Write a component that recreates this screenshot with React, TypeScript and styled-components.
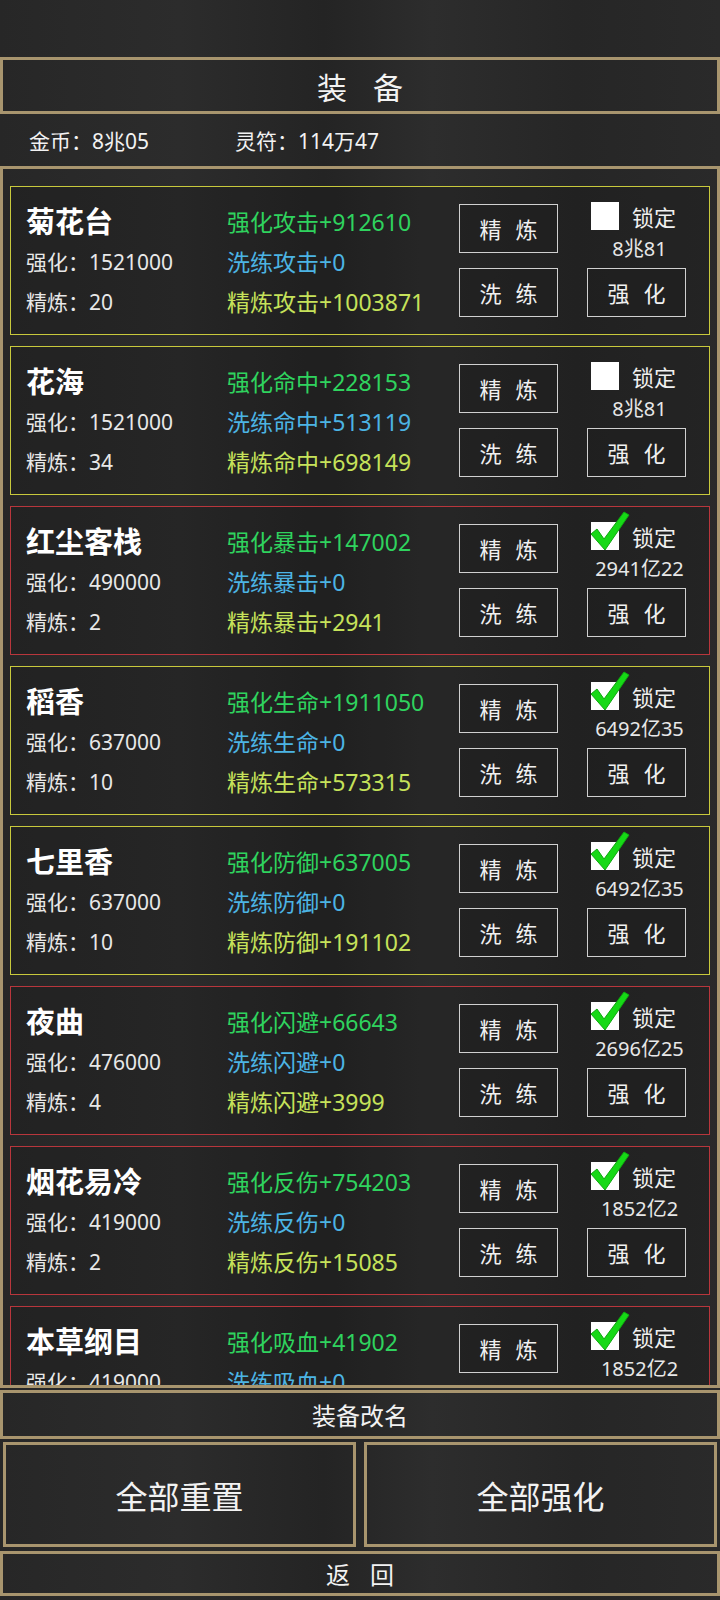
import styled, { createGlobalStyle } from "styled-components";

const GlobalStyle = createGlobalStyle`
  html, body {
    margin: 0;
    padding: 0;
    background: #262626;
  }
  * {
    box-sizing: border-box;
  }
`;

const FONT = `"Noto Sans", "Noto Sans CJK SC", sans-serif`;
const GOLD = "#a8956e";

type Item = {
  name: string;
  level: number;
  refine: number;
  attr: string;
  up: number;
  wash: number;
  ref: number;
  locked: boolean;
  cost: string;
  tone: "yellow" | "red";
};

const items: Item[] = [
  { name: "菊花台", level: 1521000, refine: 20, attr: "攻击", up: 912610, wash: 0, ref: 1003871, locked: false, cost: "8兆81", tone: "yellow" },
  { name: "花海", level: 1521000, refine: 34, attr: "命中", up: 228153, wash: 513119, ref: 698149, locked: false, cost: "8兆81", tone: "yellow" },
  { name: "红尘客栈", level: 490000, refine: 2, attr: "暴击", up: 147002, wash: 0, ref: 2941, locked: true, cost: "2941亿22", tone: "red" },
  { name: "稻香", level: 637000, refine: 10, attr: "生命", up: 1911050, wash: 0, ref: 573315, locked: true, cost: "6492亿35", tone: "yellow" },
  { name: "七里香", level: 637000, refine: 10, attr: "防御", up: 637005, wash: 0, ref: 191102, locked: true, cost: "6492亿35", tone: "yellow" },
  { name: "夜曲", level: 476000, refine: 4, attr: "闪避", up: 66643, wash: 0, ref: 3999, locked: true, cost: "2696亿25", tone: "red" },
  { name: "烟花易冷", level: 419000, refine: 2, attr: "反伤", up: 754203, wash: 0, ref: 15085, locked: true, cost: "1852亿2", tone: "red" },
  { name: "本草纲目", level: 419000, refine: 2, attr: "吸血", up: 41902, wash: 0, ref: 3352, locked: true, cost: "1852亿2", tone: "red" },
];

const Page = styled.div`
  width: 720px;
  height: 1600px;
  display: flex;
  flex-direction: column;
  font-family: ${FONT};
  color: #f2f2f2;
  background: linear-gradient(
    90deg,
    #272727 0%,
    #2c2c2c 25%,
    #242424 45%,
    #2d2d2d 60%,
    #262626 80%,
    #2a2a2a 100%
  );
  overflow: hidden;
`;

const TopSpace = styled.div`
  height: 57px;
  flex: none;
`;

const TitleBar = styled.div`
  height: 57px;
  flex: none;
  border: 3px solid ${GOLD};
  display: flex;
  align-items: center;
  justify-content: center;
  font-size: 30px;
  letter-spacing: 26px;
  padding-left: 26px;
`;

const InfoRow = styled.div`
  height: 52px;
  flex: none;
  display: flex;
  align-items: center;
  padding-left: 29px;
  font-size: 21px;
`;

const Coin = styled.span`
  width: 206px;
`;

const ListPanel = styled.div`
  height: 1222px;
  flex: none;
  border: 3px solid ${GOLD};
  padding: 17px 7px;
  display: flex;
  flex-direction: column;
  gap: 11px;
  overflow: hidden;
`;

const Card = styled.div<{ $tone: "yellow" | "red" }>`
  height: 149px;
  flex: none;
  border: 1.5px solid ${(p) => (p.$tone === "red" ? "#b8363c" : "#c8c93c")};
  display: flex;
  padding-left: 15px;
  background: rgba(20, 20, 20, 0.25);
`;

const InfoCol = styled.div`
  width: 201px;
  padding-top: 15px;
  display: flex;
  flex-direction: column;
`;

const Line = styled.div<{ $color?: string; $size?: number }>`
  height: 40px;
  line-height: 40px;
  white-space: nowrap;
  font-size: ${(p) => p.$size ?? 21}px;
  color: ${(p) => p.$color ?? "#e8e8e8"};
`;

const Name = styled.div`
  height: 40px;
  line-height: 40px;
  font-size: 29px;
  font-weight: bold;
  color: #ffffff;
  white-space: nowrap;
`;

const StatCol = styled.div`
  width: 232px;
  padding-top: 15px;
  display: flex;
  flex-direction: column;
`;

const ActionCol = styled.div`
  width: 99px;
  padding-top: 16.5px;
  display: flex;
  flex-direction: column;
  gap: 15px;
  margin-right: 29px;
`;

const Button = styled.div`
  width: 99px;
  height: 49px;
  border: 1.5px solid #d0d0d0;
  display: flex;
  align-items: center;
  justify-content: center;
  font-size: 22px;
  letter-spacing: 14px;
  padding-left: 14px;
  color: #f0f0f0;
  background: rgba(30, 30, 30, 0.5);
`;

const SideCol = styled.div`
  width: 99px;
  padding-top: 14.5px;
  display: flex;
  flex-direction: column;
`;

const LockRow = styled.div`
  height: 28px;
  display: flex;
  align-items: center;
  padding-left: 4px;
  gap: 13px;
  font-size: 22px;
  color: #f0f0f0;
`;

const Box = styled.div`
  position: relative;
  width: 28px;
  height: 28px;
  background: #ffffff;
  flex: none;
`;

const Tick = styled.svg`
  position: absolute;
  left: -2px;
  top: -14px;
  overflow: visible;
`;

const Cost = styled.div`
  height: 38px;
  line-height: 38px;
  text-align: center;
  font-size: 20px;
  color: #e8e8e8;
  padding-left: 6px;
  white-space: nowrap;
`;

const BottomBar = styled.div<{ $h: number; $mt: number; $size: number }>`
  height: ${(p) => p.$h}px;
  margin-top: ${(p) => p.$mt}px;
  flex: none;
  border: 3px solid ${GOLD};
  display: flex;
  align-items: center;
  justify-content: center;
  font-size: ${(p) => p.$size}px;
  color: #f2f2f2;
`;

const Spaced = styled.span`
  letter-spacing: 20px;
  padding-left: 20px;
`;

const BigRow = styled.div`
  height: 105px;
  margin-top: 3px;
  flex: none;
  display: flex;
  gap: 8px;
  padding: 0 3px;
`;

const BigButton = styled.div`
  flex: 1;
  border: 3px solid ${GOLD};
  display: flex;
  align-items: center;
  justify-content: center;
  font-size: 32px;
  color: #f2f2f2;
`;

function CheckBox({ checked }: { checked: boolean }) {
  return (
    <Box>
      {checked && (
        <Tick width="40" height="44" viewBox="0 0 40 44">
          <path
            d="M2 26 L8 21 L15 31 L35 4 L40 7 L16 42 Z"
            fill="#16d916"
            stroke="#0ea80e"
            strokeWidth="1"
            strokeLinejoin="round"
          />
        </Tick>
      )}
    </Box>
  );
}

function EquipCard({ item }: { item: Item }) {
  return (
    <Card $tone={item.tone}>
      <InfoCol>
        <Name>{item.name}</Name>
        <Line>强化：{item.level}</Line>
        <Line>精炼：{item.refine}</Line>
      </InfoCol>
      <StatCol>
        <Line $size={23} $color="#2fd35e">强化{item.attr}+{item.up}</Line>
        <Line $size={23} $color="#4cb4e4">洗练{item.attr}+{item.wash}</Line>
        <Line $size={23} $color="#c6e25a">精炼{item.attr}+{item.ref}</Line>
      </StatCol>
      <ActionCol>
        <Button>精炼</Button>
        <Button>洗练</Button>
      </ActionCol>
      <SideCol>
        <LockRow>
          <CheckBox checked={item.locked} />
          <span>锁定</span>
        </LockRow>
        <Cost>{item.cost}</Cost>
        <Button>强化</Button>
      </SideCol>
    </Card>
  );
}

export default function App() {
  return (
    <>
      <GlobalStyle />
      <Page>
        <TopSpace />
        <TitleBar>装备</TitleBar>
        <InfoRow>
          <Coin>金币：8兆05</Coin>
          <span>灵符：114万47</span>
        </InfoRow>
        <ListPanel>
          {items.map((item) => (
            <EquipCard key={item.name} item={item} />
          ))}
        </ListPanel>
        <BottomBar $h={49} $mt={2} $size={24}>装备改名</BottomBar>
        <BigRow>
          <BigButton>全部重置</BigButton>
          <BigButton>全部强化</BigButton>
        </BigRow>
        <BottomBar $h={45} $mt={4} $size={24}>
          <Spaced>返回</Spaced>
        </BottomBar>
      </Page>
    </>
  );
}
